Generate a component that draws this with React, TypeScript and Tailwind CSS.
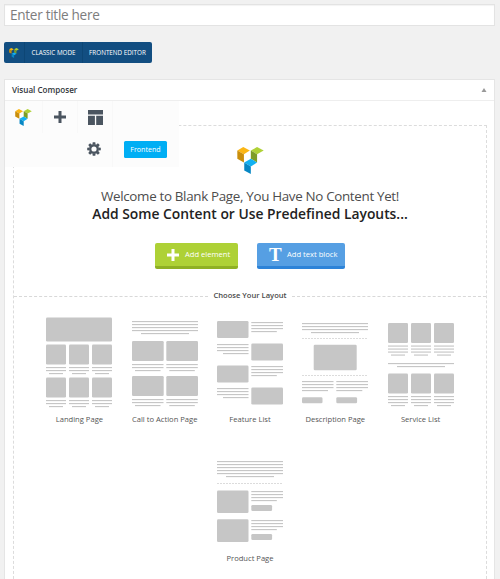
import type { ReactNode } from 'react';

type Box = [x: number, y: number, w: number, h: number];

const INK = '#c6c6c6';

function Logo({ className }: { className: string }) {
  return (
    <svg viewBox="19 13 82 82" className={className}>
      <path d="M20 24 38 13 58 24 40 35Z" fill="#fbb615" />
      <path d="M20 24 40 35V60L20 49Z" fill="#c98e0b" />
      <path d="M61 24 80 13 100 24 80 35Z" fill="#afd136" />
      <path d="M61 24 80 35V60L61 49Z" fill="#7d9d27" />
      <path d="M41 60 61 49 80 60 61 72Z" fill="#12b1f2" />
      <path d="M41 60 61 72V95L41 84Z" fill="#0787c4" />
    </svg>
  );
}

function Blocks({ items }: { items: Box[] }) {
  return (
    <>
      {items.map(([x, y, w, h], i) => (
        <rect key={i} x={x} y={y} width={w} height={h} rx="1.3" fill={INK} />
      ))}
    </>
  );
}

/* Stack of full-width text lines, 3 units apart, closed by a shorter one. */
function Lines({ x, y, w, n, sx, sw }: { x: number; y: number; w: number; n: number; sx: number; sw: number }) {
  return (
    <>
      {Array.from({ length: n }, (_, i) => (
        <rect key={i} x={x} y={y + i * 3} width={w} height="1.15" fill={INK} />
      ))}
      <rect x={sx} y={y + n * 3} width={sw} height="1.15" fill={INK} />
    </>
  );
}

function Dashes({ y }: { y: number }) {
  return <line x1="0" x2="65" y1={y + 0.5} y2={y + 0.5} stroke="#dcdcdc" strokeDasharray="2 1" />;
}

function Triple({ y, n }: { y: number; n: number }) {
  return (
    <>
      {[0, 23, 46].map((x) => (
        <g key={x}>
          <Blocks items={[[x, y, 20, 20]]} />
          <Lines x={x} y={y + 22.5} w={20} n={n} sx={x + 3} sw={14} />
        </g>
      ))}
    </>
  );
}

function Pair({ y }: { y: number }) {
  return (
    <>
      {[0, 34.3].map((x) => (
        <g key={x}>
          <Blocks items={[[x, y, 31.7, 20]]} />
          <Lines x={x} y={y + 23} w={31.5} n={2} sx={x + 3} sw={25.5} />
        </g>
      ))}
    </>
  );
}

function Layout({ label, children }: { label: string; children: ReactNode }) {
  return (
    <div className="flex h-[139px] w-[85.3px] flex-col items-center">
      <svg viewBox="0 0 66 92" className="h-[92px] w-[66px] shrink-0">
        {children}
      </svg>
      <span className="mt-[5px] text-[7.6px] leading-[12px] whitespace-nowrap text-[#555]">{label}</span>
    </div>
  );
}

export default function App() {
  return (
    <div className="flex h-[579px] w-[500px] flex-col overflow-hidden bg-[#f1f1f1] pt-[4px] pr-[5px] pl-[4px] font-['Open_Sans',sans-serif]">
      <div className="flex h-[22px] shrink-0 items-center border border-[#e3e3e3] bg-white pl-[5px] text-[13.6px] tracking-[-0.3px] text-[#7d7d7d] shadow-[inset_0_1px_1px_rgba(0,0,0,0.05)]">
        <span className="leading-[18px] whitespace-nowrap">Enter title here</span>
      </div>

      <div className="mt-[16px] flex h-[21px] w-[148px] shrink-0 items-center rounded-[2px] bg-[#124e81] text-[6.3px] font-medium text-white">
        <div className="flex h-full w-[21px] items-center justify-center border-r border-[#0d4675]">
          <Logo className="h-[10px] w-[10px]" />
        </div>
        <span className="flex h-full w-[58px] items-center justify-center border-r border-[#0d4675] whitespace-nowrap">CLASSIC MODE</span>
        <span className="flex flex-1 items-center justify-center whitespace-nowrap">FRONTEND EDITOR</span>
      </div>

      <div className="mt-[16px] flex flex-1 flex-col border border-b-0 border-[#e5e5e5] bg-white">
        <div className="flex h-[21px] shrink-0 items-center justify-between border-b border-[#eee] pr-[7px] pl-[7px]">
          <h2 className="text-[8.1px] font-semibold whitespace-nowrap text-[#32373c]">Visual Composer</h2>
          <svg viewBox="0 0 6 4" className="h-[4px] w-[6px]">
            <path d="M3 0 5.5 4H.5Z" fill="#999" />
          </svg>
        </div>

        <div className="relative flex flex-1 flex-col pt-[24px] pr-[7px] pl-[8px]">
          <div className="absolute top-0 left-0 grid h-[66px] w-[174px] grid-cols-[38px_35px_35px_66px] grid-rows-[32px_34px] bg-[#fcfcfc]">
            <div className="flex items-center justify-center border-r border-[#f8f8f8]">
              <Logo className="h-[17px] w-[17px]" />
            </div>
            <div className="flex items-center justify-center border-r border-[#f8f8f8]">
              <svg viewBox="0 0 12 12" className="h-[12px] w-[12px]" fill="#4b5560">
                <path d="M4.5 0h3v4.5H12v3H7.500V12h-3V7.500H0v-3h4.500Z" />
              </svg>
            </div>
            <div className="flex items-center justify-center border-r border-[#f8f8f8]">
              <svg viewBox="0 0 15 15" className="h-[15px] w-[15px]" fill="#4b5560">
                <path d="M0 0h15v4.500H0ZM0 5.800h6.900v9.200H0ZM8.200 5.800H15v9.200H8.200Z" />
              </svg>
            </div>
            <div />
            <div className="col-start-3 flex items-center justify-center border-r border-[#f8f8f8] pr-[3px] pb-[2px]">
              <svg viewBox="0 0 14 14" className="h-[14px] w-[14px]">
                <circle cx="7" cy="7" r="3.7" fill="none" stroke="#4b5560" strokeWidth="2.200" />
                {[0, 45, 90, 135, 180, 225, 270, 315].map((a) => (
                  <path key={a} d="M5.700 .2h2.600l.3 2.600H5.400Z" fill="#4b5560" transform={`rotate(${a} 7 7)`} />
                ))}
              </svg>
            </div>
            <div className="flex items-center pb-[1px] pl-[11px]">
              <span className="flex h-[17px] w-[43px] items-center justify-center rounded-[1.5px] bg-[#00aef4] text-[7.1px] text-white">Frontend</span>
            </div>
          </div>

          <div className="flex flex-1 flex-col items-center border border-b-0 border-dashed border-[#dcdcdc]">
            <Logo className="mt-[21px] h-[27px] w-[27px] shrink-0" />
            <p className="mt-[14px] text-[13.4px] leading-[17px] tracking-[-0.33px] whitespace-nowrap text-[#4d4d4d]">
              Welcome to Blank Page, You Have No Content Yet!
            </p>
            <p className="text-[13.85px] leading-[17px] font-semibold whitespace-nowrap text-[#222]">
              Add Some Content or Use Predefined Layouts...
            </p>

            <div className="mt-[21px] flex h-[26px] shrink-0 gap-[19px] text-[7.6px] text-white">
              <div className="flex w-[83px] items-center rounded-[2px] border-b-[3px] border-[#8fb024] bg-[#aed136] pl-[12px]">
                <svg viewBox="0 0 12 12" className="h-[12px] w-[12px]" fill="white">
                  <path d="M4.500 0h3v4.500H12v3H7.500V12h-3V7.500H0v-3h4.500Z" />
                </svg>
                <span className="ml-[6px] whitespace-nowrap">Add element</span>
              </div>
              <div className="flex w-[88px] items-center rounded-[2px] border-b-[3px] border-[#2d83d8] bg-[#569fe3] pl-[12px]">
                <span className="w-[12px] text-center font-['Liberation_Serif',serif] text-[19px] leading-[18px] font-bold">T</span>
                <span className="ml-[6px] whitespace-nowrap">Add text block</span>
              </div>
            </div>

            <div className="mt-[20px] flex h-[14px] w-full shrink-0 items-center gap-[5px]">
              <div className="flex-1 border-t border-dashed border-[#d8d8d8]" />
              <span className="text-[7.6px] font-semibold whitespace-nowrap text-[#4a4a4a]">Choose Your Layout</span>
              <div className="flex-1 border-t border-dashed border-[#d8d8d8]" />
            </div>

            <div className="mt-[13px] flex w-[427px] shrink-0 flex-wrap justify-center">
              <Layout label="Landing Page">
                <Blocks items={[[0, 1.5, 66, 24]]} />
                <Triple y={28.5} n={2} />
                <Triple y={61.5} n={2} />
              </Layout>
              <Layout label="Call to Action Page">
                <Lines x={0} y={5} w={66} n={4} sx={9} sw={48} />
                <Pair y={25} />
                <Pair y={60} />
              </Layout>
              <Layout label="Feature List">
                <Blocks items={[[0, 5, 31.5, 17], [34.3, 27.5, 31.7, 17], [0, 49.500, 31.5, 17], [34.3, 71.500, 31.7, 17]]} />
                <Lines x={34.3} y={6} w={31.7} n={3} sx={34.3} sw={25.500} />
                <Lines x={0} y={28} w={31.5} n={3} sx={6} sw={25.500} />
                <Lines x={34.3} y={50} w={31.7} n={3} sx={34.3} sw={25.500} />
                <Lines x={0} y={72} w={31.5} n={3} sx={6} sw={25.500} />
              </Layout>
              <Layout label="Description Page">
                <Lines x={0} y={7} w={66} n={3} sx={9} sw={48} />
                <Dashes y={22} />
                <Blocks items={[[11.7, 28.7, 43, 25.500], [0, 81.300, 20.500, 6], [34.3, 81.300, 20.800, 6]]} />
                <Dashes y={59} />
                <Lines x={0} y={65} w={31.500} n={3} sx={0} sw={26} />
                <Lines x={34.3} y={65} w={31.700} n={3} sx={34.3} sw={26} />
              </Layout>
              <Layout label="Service List">
                <Triple y={7} n={3} />
                <Lines x={0} y={47} w={66} n={1} sx={9} sw={48} />
                <Triple y={57.500} n={3} />
              </Layout>
              <Layout label="Product Page">
                <Lines x={0} y={6} w={66} n={5} sx={9} sw={48} />
                <Dashes y={28} />
                <Blocks items={[[0, 35.500, 31.500, 22.500], [34.3, 50, 20.800, 6], [0, 64.300, 31.500, 22.700], [34.3, 79, 20.800, 6]]} />
                <Lines x={34.3} y={36} w={31.700} n={3} sx={34.3} sw={25.500} />
                <Lines x={34.3} y={65} w={31.700} n={3} sx={34.3} sw={25.500} />
              </Layout>
            </div>
          </div>
        </div>
      </div>
    </div>
  );
}
